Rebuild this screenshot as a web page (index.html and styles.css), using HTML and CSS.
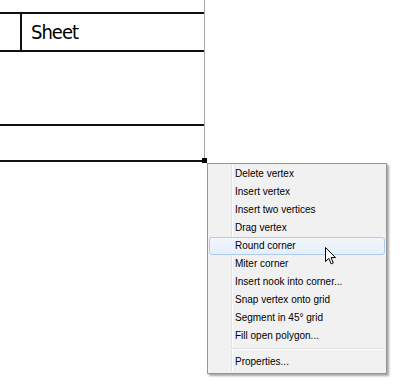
FILE: index.html
```html
<!DOCTYPE html>
<html>
<head>
<meta charset="utf-8">
<link rel="stylesheet" href="styles.css">
</head>
<body>
<div class="canvas">
  <div class="gap-top"></div>
  <div class="row-sheet">
    <div class="cell-left"></div>
    <div class="cell-title">Sheet</div>
  </div>
  <div class="row-body"></div>
  <div class="row-foot"></div>
  <div class="baseline"><span class="handle"></span></div>
</div>

<div class="menu">
  <ul class="items">
    <li class="item">Delete vertex</li>
    <li class="item">Insert vertex</li>
    <li class="item">Insert two vertices</li>
    <li class="item">Drag vertex</li>
    <li class="item hot">Round corner</li>
    <li class="item">Miter corner</li>
    <li class="item">Insert nook into corner...</li>
    <li class="item">Snap vertex onto grid</li>
    <li class="item">Segment in 45° grid</li>
    <li class="item">Fill open polygon...</li>
    <li class="sep"></li>
    <li class="item">Properties...</li>
  </ul>
</div>

<svg class="cursor" width="12" height="18" viewBox="0 0 12 18">
  <path d="M0.5 0.5 L0.5 14.5 L3.8 11.4 L6.2 16.8 L8.3 15.9 L6 10.6 L10.5 10.6 Z" fill="#fff" stroke="#000" stroke-width="1" stroke-linejoin="miter"/>
</svg>
</body>
</html>
```
FILE: styles.css
```css
html, body {
  margin: 0;
  padding: 0;
  background: #fff;
  width: 400px;
  height: 385px;
  overflow: hidden;
  position: relative;
}
.canvas {
  width: 204px;
  border-right: 1px solid #a8a8a8;
  display: flex;
  flex-direction: column;
}
.gap-top { height: 12px; }
.row-sheet {
  height: 36px;
  border-top: 2px solid #111;
  border-bottom: 2px solid #111;
  display: flex;
}
.cell-left {
  width: 20px;
  border-right: 2px solid #111;
}
.cell-title {
  padding-left: 9px;
  font-family: "DejaVu Sans Condensed", "DejaVu Sans", sans-serif;
  font-size: 20px;
  line-height: 37px;
  color: #000;
  letter-spacing: -1px;
}
.row-body {
  height: 72px;
  border-bottom: 2px solid #111;
}
.row-foot {
  height: 34px;
}
.baseline {
  height: 2px;
  width: 205px;
  background: #111;
  position: relative;
}
.handle {
  position: absolute;
  left: 202px;
  top: -2px;
  width: 5px;
  height: 5px;
  background: #000;
}
.menu {
  position: absolute;
  left: 207px;
  top: 163px;
  width: 178px;
  background: #f1f1f1;
  border: 1px solid #979797;
  box-shadow: 2px 2px 2px rgba(0,0,0,0.35);
  padding: 1px 0 2px 0;
  font-family: "Liberation Sans", Arial, sans-serif;
  font-size: 10px;
  color: #000;
}
.items {
  list-style: none;
  margin: 0;
  padding: 0;
  background: linear-gradient(to right, transparent 23px, #e2e3e3 23px, #e2e3e3 24px, #fff 24px, #fff 25px, transparent 25px);
}
.item {
  height: 18px;
  line-height: 16px;
  box-sizing: border-box;
  border: 1px solid transparent;
  border-radius: 3px;
  margin: 0 1px 0 1px;
  padding-left: 25px;
}
.item.hot {
  border-color: #aeccf1;
  background: linear-gradient(to bottom, #f2f7fd, #e5eefa);
}
.sep {
  height: 8px;
  margin-left: 23px;
  margin-right: 2px;
  background: linear-gradient(to bottom, transparent 3px, #e0e0e0 3px, #e0e0e0 4px, #fff 4px, #fff 5px, transparent 5px);
}
.cursor {
  position: absolute;
  left: 325px;
  top: 247px;
}
```
